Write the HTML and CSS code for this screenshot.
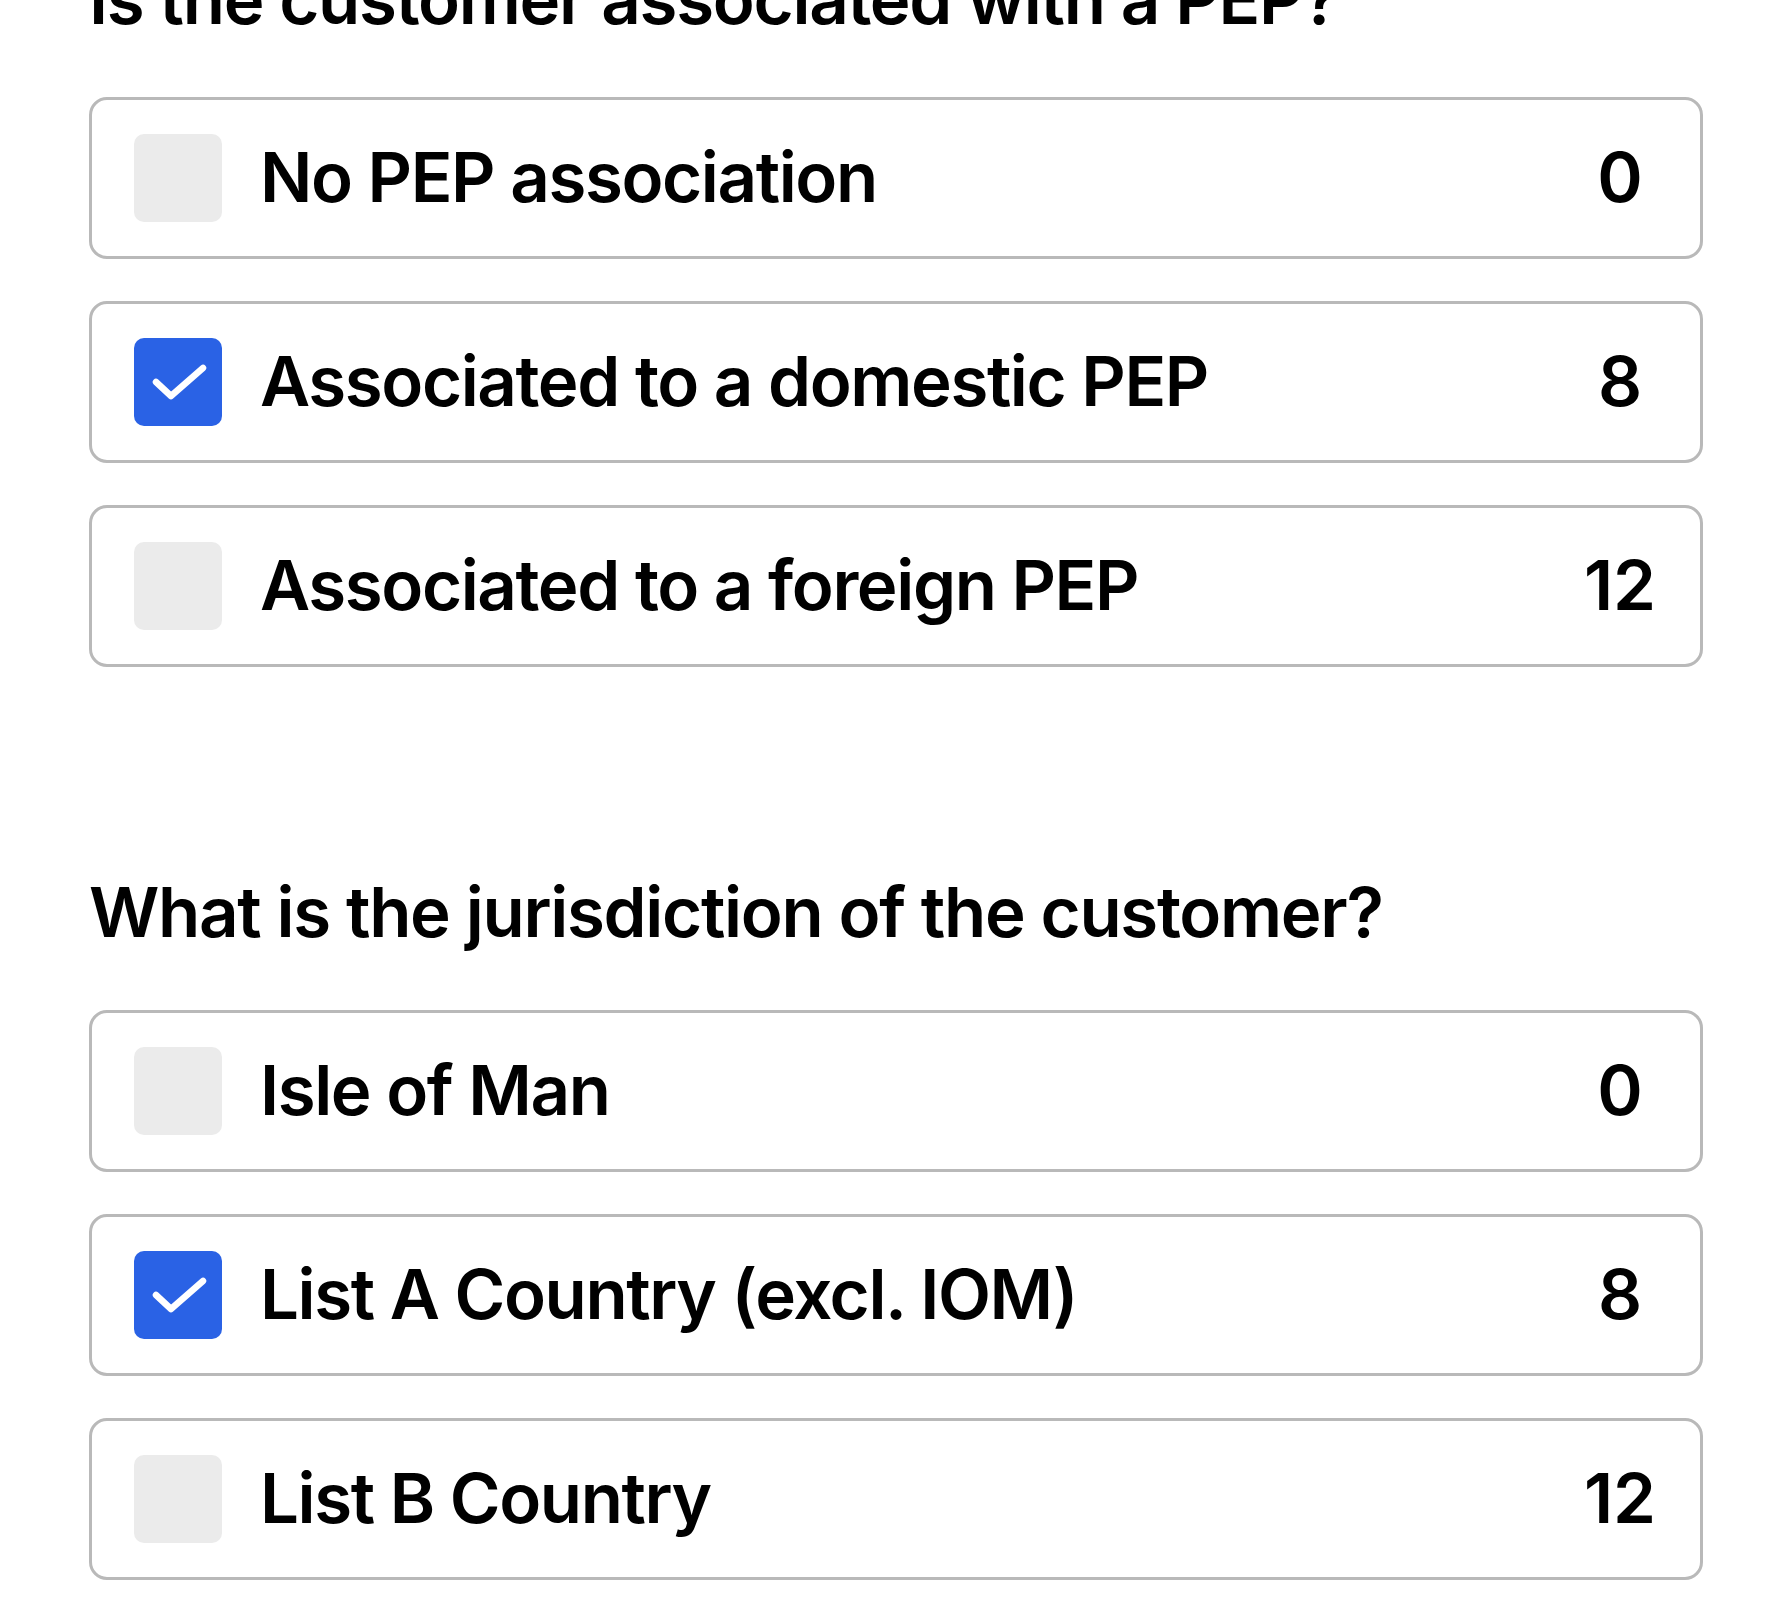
FILE: index.html
```html
<!DOCTYPE html>
<html lang="en">

<head>
  <meta charset="UTF-8" />
  <meta name="viewport" content="width=device-width, initial-scale=1" />
  <title>Risk Assessment</title>
  <link rel="stylesheet" href="styles.css">
</head>

<body>
  <main class="form">
    <section class="question">
      <h2 class="questionTitle">Is the customer associated with a PEP?</h2>
      <div class="optionList">
        <label class="option">
          <span class="check"></span>
          <span class="optionLabel">No PEP association</span>
          <span class="optionScore">0</span>
        </label>
        <label class="option selected">
          <span class="check">
            <svg viewBox="0 0 88 88" class="checkMark"><path d="M22 44 L37 58 L69 30" /></svg>
          </span>
          <span class="optionLabel">Associated to a domestic PEP</span>
          <span class="optionScore">8</span>
        </label>
        <label class="option">
          <span class="check"></span>
          <span class="optionLabel">Associated to a foreign PEP</span>
          <span class="optionScore">12</span>
        </label>
      </div>
    </section>

    <section class="question">
      <h2 class="questionTitle">What is the jurisdiction of the customer?</h2>
      <div class="optionList">
        <label class="option">
          <span class="check"></span>
          <span class="optionLabel">Isle of Man</span>
          <span class="optionScore">0</span>
        </label>
        <label class="option selected">
          <span class="check">
            <svg viewBox="0 0 88 88" class="checkMark"><path d="M22 44 L37 58 L69 30" /></svg>
          </span>
          <span class="optionLabel">List A Country (excl. IOM)</span>
          <span class="optionScore">8</span>
        </label>
        <label class="option">
          <span class="check"></span>
          <span class="optionLabel">List B Country</span>
          <span class="optionScore">12</span>
        </label>
      </div>
    </section>
  </main>
</body>

</html>
```

FILE: styles.css
```css
html {
  background: #ffffff;
}

body {
  margin: 0;
  padding: 0;
  background: #ffffff;
  color: #000000;
  font-family: "Inter", "Liberation Sans", sans-serif;
  overflow: hidden;
}

.form {
  padding: 0 89px;
  margin-top: -42px;
}

.question + .question {
  margin-top: 204px;
}

.questionTitle {
  margin: 0 0 56px 0;
  font-size: 69px;
  font-weight: 560;
  letter-spacing: -1.3px;
  line-height: 1.2;
}

.optionList {
  display: flex;
  flex-direction: column;
  gap: 42px;
}

.option {
  display: flex;
  align-items: center;
  padding: 34px 42px;
  border: 3px solid #b9b9b9;
  border-radius: 18px;
  font-size: 69px;
  font-weight: 560;
  letter-spacing: -1.4px;
}

.check {
  flex: none;
  width: 88px;
  height: 88px;
  border-radius: 10px;
  background: #ebebeb;
  margin-right: 38px;
}

.selected .check {
  background: #2a62e5;
}

.checkMark {
  display: block;
  width: 88px;
  height: 88px;
}

.checkMark path {
  fill: none;
  stroke: #ffffff;
  stroke-width: 6.5;
  stroke-linecap: round;
  stroke-linejoin: round;
}

.optionLabel {
  flex: 1;
  line-height: 1;
}

.optionScore {
  flex: none;
  width: 80px;
  margin-right: -2px;
  text-align: center;
  line-height: 1;
  letter-spacing: 0;
}
```
